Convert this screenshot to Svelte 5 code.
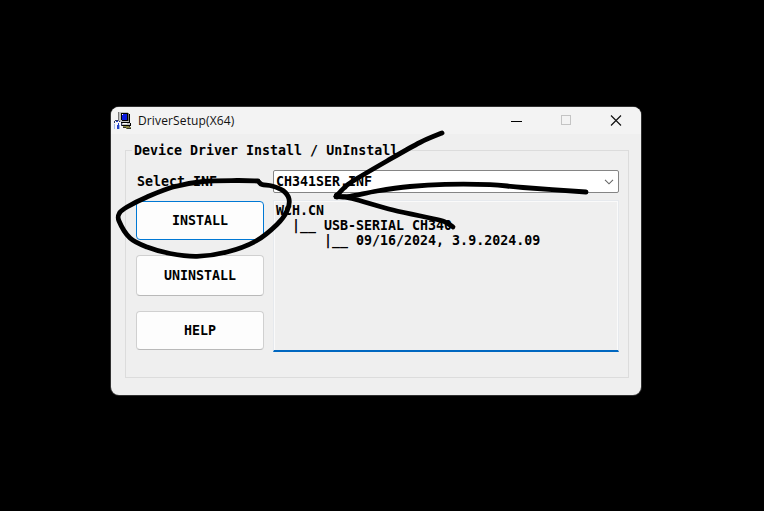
<script>
  const tree = 'WCH.CN\n  |__ USB-SERIAL CH340\n      |__ 09/16/2024, 3.9.2024.09';

  // Smooth pen stroke through a list of points.
  function smooth(p) {
    let d = `M${p[0][0]} ${p[0][1]}`;
    for (let i = 0; i < p.length - 1; i++) {
      const a = p[i - 1] ?? p[i];
      const b = p[i];
      const c = p[i + 1];
      const e = p[i + 2] ?? c;
      d += `C${b[0] + (c[0] - a[0]) / 6} ${b[1] + (c[1] - a[1]) / 6} ${c[0] - (e[0] - b[0]) / 6} ${c[1] - (e[1] - b[1]) / 6} ${c[0]} ${c[1]}`;
    }
    return d;
  }

  const loop = [[258, 181], [237, 180.5], [203, 181.5], [173, 187], [147, 197], [127, 207], [119.5, 213], [119, 221], [130, 238], [147, 247], [170, 253.5], [197, 256.3], [227, 252], [256, 241], [277, 224.5], [287, 211], [289, 199], [283, 190.5], [272, 186], [262, 184.5], [258, 181]];
  const arrow = [
    [[442, 133], [420, 142.5], [387, 161], [353, 181], [344, 188], [336, 196.5]],
    [[336, 196.5], [350, 196.3], [377, 191], [410, 186.5], [445, 184.3], [490, 184.6], [523, 187.5], [586, 192]],
    [[336, 196.5], [352, 198.5], [393, 210], [437, 219.5], [447, 223], [453, 227]]
  ];
</script>

<main>
  <section class="window">
    <header>
      <svg class="app" width="18" height="18" viewBox="0 0 18 18" shape-rendering="crispEdges">
        <path fill="#c0c0c0" d="M5 0h9v1H5zM5 1h2v9H5zM7 8h8v2H7zM13 2h1v7h-1zM14 2h2v8h-2zM8 11h8v2H8z" />
        <path fill="#777" d="M4 0h1v9H4zM14 1h1v8h-1zM9 10h7v1H9zM8 13h7v1H8z" />
        <path fill="#000" d="M7 1h7v1H7zM7 2h1v6H7zM13 2h1v6h-1zM8 8h6v1H8zM15 2h1v8h-1zM6 10h10v1H6zM16 11h1v3h-1zM8 13h8v1H8z" />
        <path fill="#0a1ae0" d="M8 2h5v6H8z" />
        <path fill="#fff" d="M8 2h1v1H8zM9 11h4v1H9z" />
        <path fill="#85823f" d="M9 14h6v1H9zM12 15h5v2h-5z" />
        <path fill="#333" d="M9 15h3v1H9zM13 16h4v1h-4zM15 14h1v1h-1z" />
        <path fill="#f8f8ff" d="M1 10h6v2H1zM1 12h3v5H1zM5 12h2v3H5zM2 7h2v2H2z" />
        <path fill="#333a60" d="M1 8h3v1H1zM0 9h1v2H0zM5 9h1v1H5zM7 11h1v3H7z" />
        <path fill="#2441c8" d="M2 9h2v1H2zM4 11h1v6H4zM3 13h1v4H3z" />
        <path fill="#9db8e8" d="M0 12h1v5H0zM5 13h1v4H5z" />
      </svg>
      <span class="title">DriverSetup(X64)</span>
      <div class="controls">
        <svg width="12" height="12"><path d="M1 6.5h11" stroke="#000" /></svg>
        <svg width="12" height="12"><rect x="1.5" y=".5" width="9" height="9" fill="none" stroke="#c4c4c4" /></svg>
        <svg width="12" height="12"><path d="M1 .5l10 10M11 .5L1 10.500" stroke="#111" stroke-width="1.15" /></svg>
      </div>
    </header>

    <fieldset>
      <legend>Device Driver Install / UnInstall</legend>
      <div class="body">
        <div class="left">
          <span class="label">Select INF</span>
          <button class="primary">INSTALL</button>
          <button class="tall">UNINSTALL</button>
          <button>HELP</button>
        </div>
        <div class="right">
          <div class="combo">
            <span>CH341SER.INF</span>
            <svg width="10" height="6"><path d="M1 .8l4 4 4-4" fill="none" stroke="#666" stroke-width="1.1" /></svg>
          </div>
          <pre>{tree}</pre>
        </div>
      </div>
    </fieldset>
  </section>

  <svg class="ink" width="764" height="511" viewBox="0 0 764 511">
    <path d={smooth(loop)} />
    {#each arrow as line}
      <path d={smooth(line)} />
    {/each}
    <path d="M337 195.500v1" stroke-width="6" />
  </svg>
</main>

<style>
  :global(body) { background: #000; }
  main {
    position: relative;
    width: 764px;
    height: 511px;
    padding: 107px 0 0 111px;
    box-sizing: border-box;
    background: #000;
    overflow: hidden;
    color: #000;
    font: bold 13.3px/15px "DejaVu Sans Mono", monospace;
  }
  .window {
    width: 530px;
    height: 288px;
    background: #efefef;
    border-radius: 8px;
    overflow: hidden;
    box-shadow: 0 0 0 1px #303030;
  }
  header {
    display: flex;
    align-items: center;
    height: 27px;
    padding: 0 19px 0 3px;
    background: #f3f3f3;
  }
  .title {
    margin-left: 6px;
    font: 12px/18px "Open Sans", "Noto Sans", sans-serif;
    letter-spacing: 0.13px;
    color: #111;
  }
  .controls { display: flex; gap: 38px; margin-left: auto; }
  .controls svg { display: block; }
  fieldset {
    margin: 9px 0 0 14px;
    padding: 0;
    width: 504px;
    height: 235px;
    box-sizing: border-box;
    border: 1px solid #dcdcdc;
    min-width: 0;
  }
  legend { margin-left: 6px; padding: 0 2px; height: 15px; white-space: nowrap; }
  .body { display: flex; gap: 9px; padding: 12px 0 0 10px; }
  .left { display: flex; flex-direction: column; width: 128px; }
  .label { height: 31px; line-height: 23px; padding-left: 1px; }
  button {
    width: 128px;
    height: 39px;
    margin: 0 0 15px;
    padding: 0;
    border: 1px solid #d0d0d0;
    border-bottom-color: #b9b9b9;
    border-radius: 4px;
    background: #fdfdfd;
    color: #000;
    font: inherit;
  }
  .tall { height: 41px; }
  .primary { border-color: #0078d4; }
  .right { display: flex; flex-direction: column; gap: 7px; width: 346px; }
  .combo {
    display: flex;
    align-items: center;
    justify-content: space-between;
    height: 23px;
    box-sizing: border-box;
    padding: 0 4px 0 2px;
    border: 1px solid #858585;
    border-radius: 2px;
    background: #fff;
  }
  pre {
    margin: 0;
    height: 152px;
    box-sizing: border-box;
    padding: 2px 2px 0;
    border: 1px solid #e6e9ed;
    border-bottom: 2px solid #0067c0;
    box-shadow: inset 1px 1px #fafafa, inset -1px 0 #fafafa;
    font: inherit;
  }
  .ink {
    position: absolute;
    left: 0;
    top: 0;
    fill: none;
    stroke: #000;
    stroke-width: 4.8;
    stroke-linecap: round;
    stroke-linejoin: round;
    pointer-events: none;
  }
</style>
